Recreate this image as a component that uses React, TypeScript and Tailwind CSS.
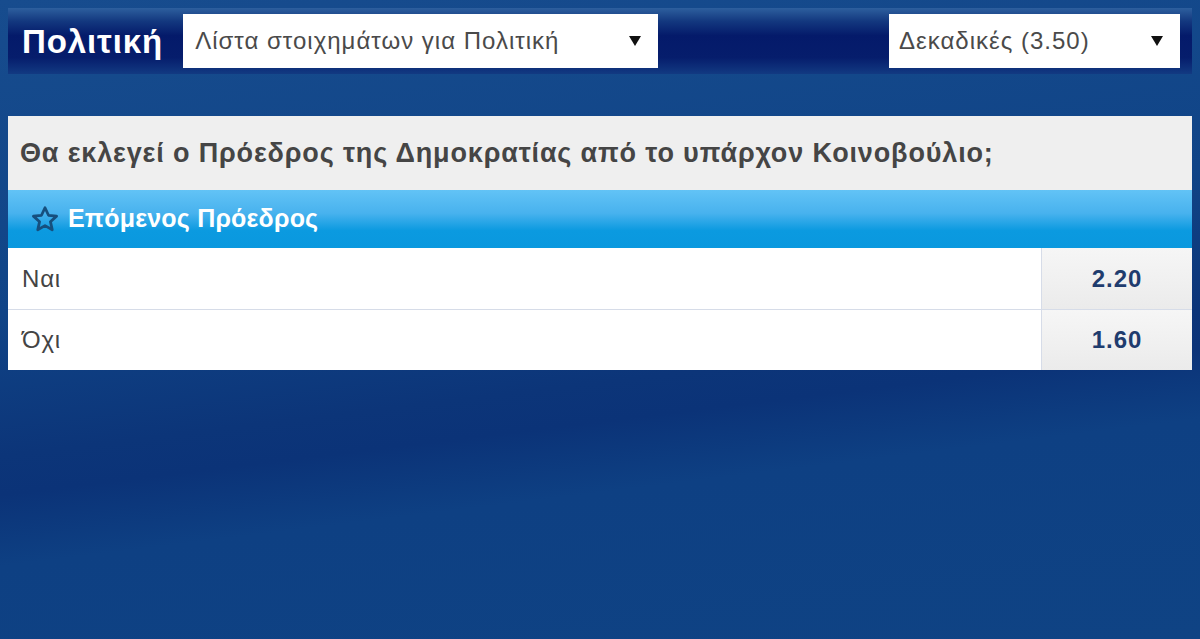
import React from "react";

const FONT = { fontFamily: '"Liberation Sans", Arial, sans-serif' };

const Arrow = () => (
  <svg width="14" height="12" viewBox="0 0 14 12" className="shrink-0">
    <path d="M1 1 H13 L7 11 Z" fill="#111" />
  </svg>
);

const Star = () => (
  <svg width="30" height="29" viewBox="0 0 24 24" className="shrink-0">
    <path
      d="M12 2.3 L14.9 8.5 L21.6 9.2 L16.5 13.8 L18 20.5 L12 17.1 L6 20.5 L7.5 13.8 L2.4 9.2 L9.1 8.5 Z"
      fill="none"
      stroke="#164f7e"
      strokeWidth="2.3"
      strokeLinejoin="round"
    />
  </svg>
);

const OUTCOMES = [
  { label: "Ναι", odds: "2.20" },
  { label: "Όχι", odds: "1.60" },
];

export default function App() {
  return (
    <div
      className="h-[639px] w-[1200px] overflow-hidden bg-[linear-gradient(173deg,#174c8e_0%,#104487_40%,#0c3579_58%,#0b3378_63%,#0e4083_72%,#0f4384_100%)] p-2"
      style={FONT}
    >
      <div className="flex h-[66px] items-center bg-[linear-gradient(180deg,#2d5f9e_0%,#13387f_20%,#041a6a_42%,#061d6c_75%,#123a82_100%)] pr-3 pl-[14px]">
        <h1 className="mr-[20px] text-[33px] leading-none font-bold tracking-[0.9px] text-white">
          Πολιτική
        </h1>
        <div className="flex h-[54px] w-[475px] items-center justify-between bg-white pr-4 pl-3 text-[24px] tracking-[1px] text-[#4a4a4a]">
          <span>Λίστα στοιχημάτων για Πολιτική</span>
          <Arrow />
        </div>
        <div className="ml-auto flex h-[54px] w-[291px] items-center justify-between bg-white pr-4 pl-[10px] text-[24px] tracking-[1px] text-[#4a4a4a]">
          <span>Δεκαδικές (3.50)</span>
          <Arrow />
        </div>
      </div>

      <div className="mt-[42px] bg-white">
        <div className="flex h-[74px] items-center bg-[#efefef] px-3 text-[27px] font-bold tracking-[0.85px] text-[#454545]">
          Θα εκλεγεί ο Πρόεδρος της Δημοκρατίας από το υπάρχον Κοινοβούλιο;
        </div>
        <div className="flex h-[58px] items-center gap-[8px] bg-[linear-gradient(180deg,#62c3f6_0%,#48b2ee_40%,#0b9ae0_70%,#0a98de_100%)] pl-[22px] text-[25px] font-bold tracking-[0.2px] text-white">
          <Star />
          <span>Επόμενος Πρόεδρος</span>
        </div>
        {OUTCOMES.map((o, i) => (
          <div
            key={o.label}
            className={`flex h-[61px] items-stretch ${i > 0 ? "border-t border-[#d6dce8]" : ""}`}
          >
            <div className="flex flex-1 items-center pl-[14px] text-[24px] tracking-[0.8px] text-[#444]">
              {o.label}
            </div>
            <div className="flex w-[151px] items-center justify-center border-l border-[#d6dce8] bg-[linear-gradient(180deg,#f6f6f6_0%,#ebebeb_100%)] text-[24px] font-bold tracking-[1px] text-[#1f3c6e]">
              {o.odds}
            </div>
          </div>
        ))}
      </div>
    </div>
  );
}
